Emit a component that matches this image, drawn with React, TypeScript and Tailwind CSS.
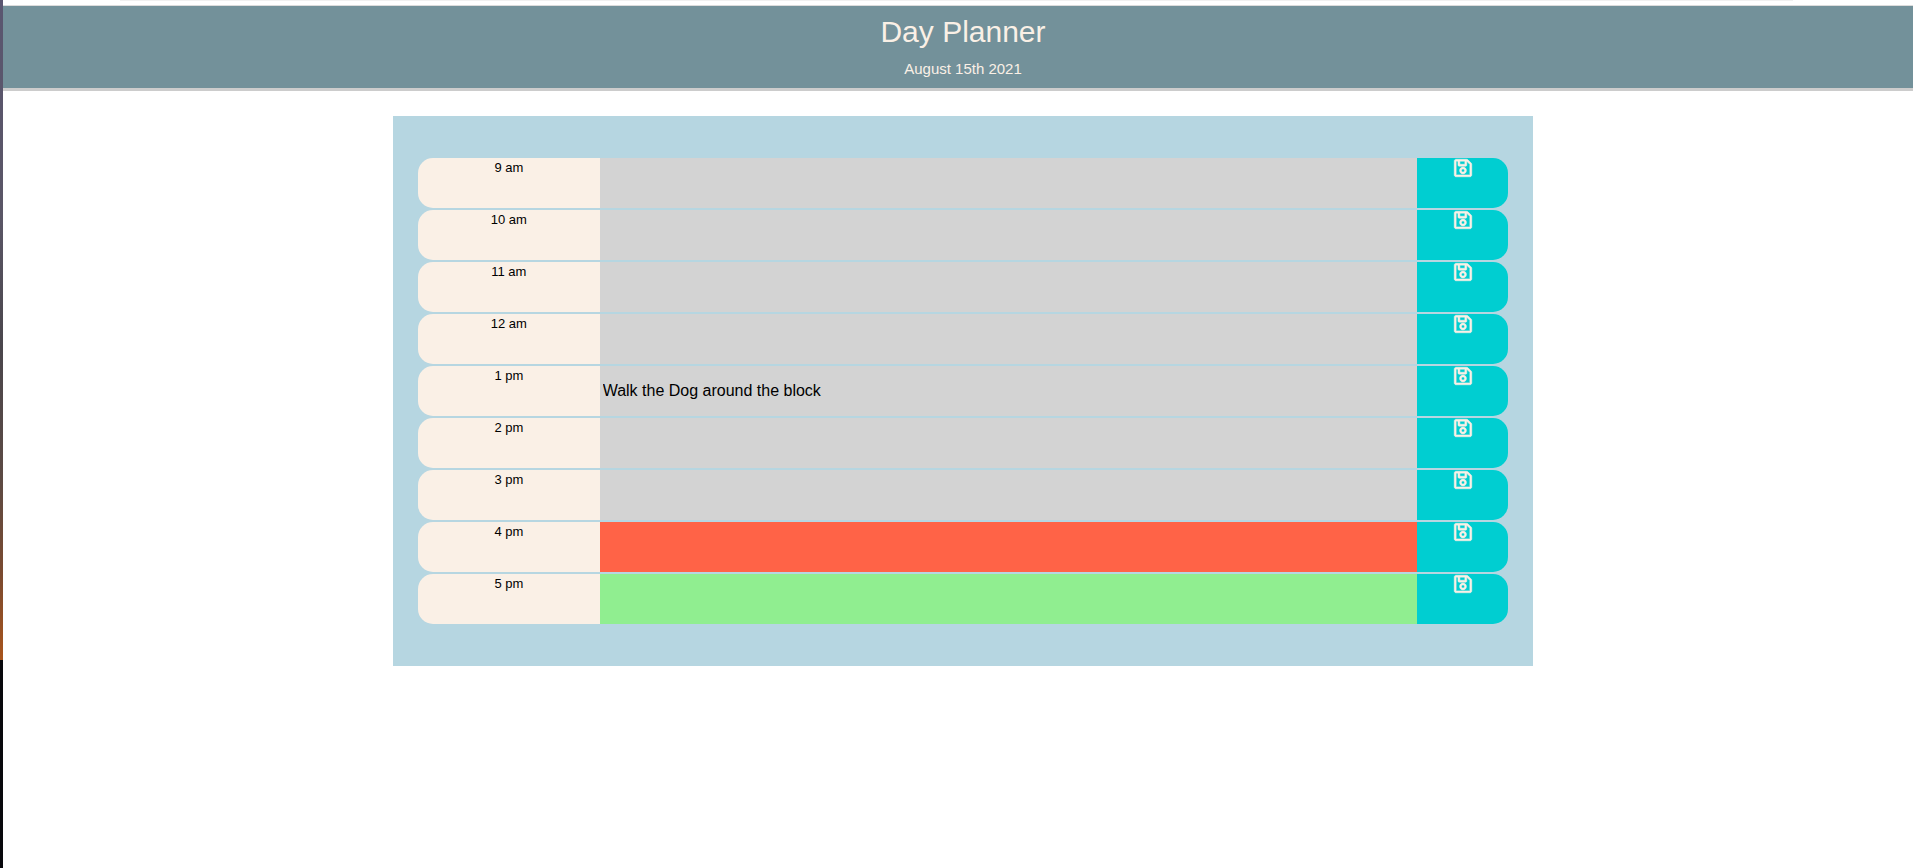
import { FaRegSave } from "react-icons/fa";

type Slot = { time: string; tone: string; text: string };

const past = "bg-[#d3d3d3]";
const slots: Slot[] = [
  { time: "9 am", tone: past, text: "" },
  { time: "10 am", tone: past, text: "" },
  { time: "11 am", tone: past, text: "" },
  { time: "12 am", tone: past, text: "" },
  { time: "1 pm", tone: past, text: "Walk the Dog around the block" },
  { time: "2 pm", tone: past, text: "" },
  { time: "3 pm", tone: past, text: "" },
  { time: "4 pm", tone: "bg-[#ff6347]", text: "" },
  { time: "5 pm", tone: "bg-[#90ee90]", text: "" },
];

function TimeBlock({ slot }: { slot: Slot }) {
  const id = "slot-" + slot.time.replace(" ", "-");
  return (
    <div className="grid h-[50px] grid-cols-[2fr_9fr_1fr]">
      <label
        htmlFor={id}
        className="rounded-l-[15px] bg-[#faf0e6] text-center text-[13px] leading-5"
      >
        {slot.time}
      </label>
      <input
        id={id}
        type="text"
        defaultValue={slot.text}
        className={`min-w-0 px-[3px] text-base text-black outline-none ${slot.tone}`}
      />
      <button
        type="button"
        aria-label={`Save ${slot.time}`}
        className="flex items-start justify-center rounded-r-[15px] bg-[#00ced1] text-[#faf0e6]"
      >
        <FaRegSave className="size-5 overflow-visible stroke-[14]" />
      </button>
    </div>
  );
}

export default function App() {
  return (
    <div className="flex min-h-screen bg-white font-['Liberation_Sans',Arial,sans-serif] text-black">
      <div className="w-[3px] shrink-0 bg-[linear-gradient(to_bottom,#5a5670_0%,#5a5666_25%,#4a464c_40%,#5c4a44_55%,#7a4a30_66%,#a8541c_76%,#08080c_76%,#08080c_100%)]" />
      <div className="grow">
        <div className="mr-[120px] mb-1 ml-[117px] h-px bg-[#f0f0f0]" />
        <header className="border-t border-b-3 border-t-[#dcdcdc] border-b-[#cccccc] bg-[#73919a] pt-2 pb-2 pl-[10px] text-center text-[#faf0e6]">
          <h1 className="text-[30px] leading-9">Day Planner</h1>
          <p className="mt-2 text-[15px] leading-[22px]">August 15th 2021</p>
        </header>
        <main className="pt-[25px] pl-[10px]">
          <div className="mx-auto flex max-w-[1140px] flex-col gap-[2px] bg-[#b6d6e1] px-[25px] py-[42px]">
            {slots.map((slot) => (
              <TimeBlock key={slot.time} slot={slot} />
            ))}
          </div>
        </main>
      </div>
    </div>
  );
}
